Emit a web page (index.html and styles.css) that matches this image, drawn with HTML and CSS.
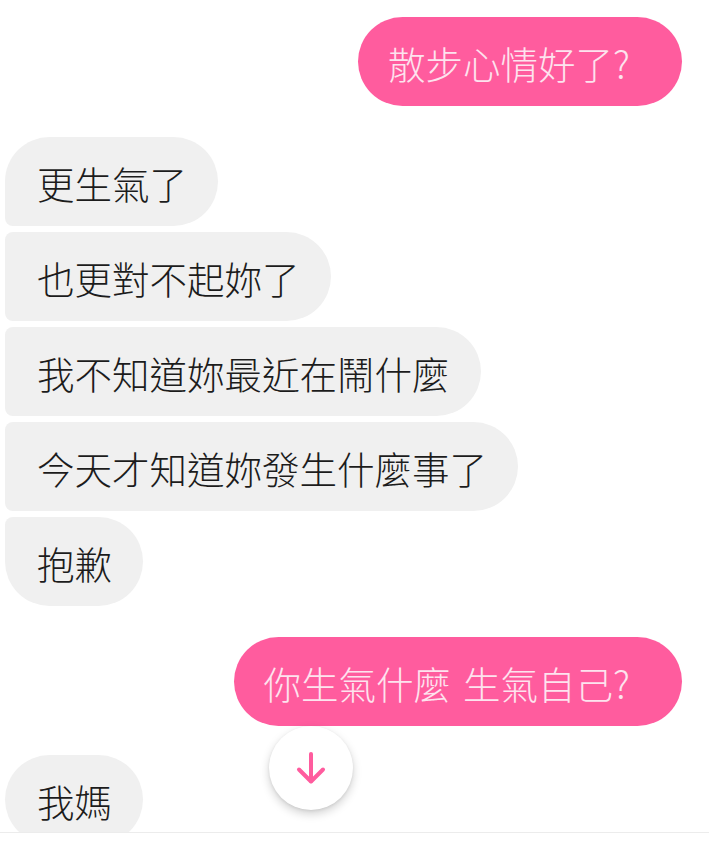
FILE: index.html
```html
<!DOCTYPE html>
<html lang="zh-Hant">
<head>
  <meta charset="UTF-8">
  <meta name="viewport" content="width=device-width, initial-scale=1.0">
  <title>聊天</title>
  <link rel="stylesheet" href="styles.css">
</head>
<body>
  <div class="chat">
    <div class="thread">
      <div class="row row-out">
        <div class="bubble bubble-out">散步心情好了?</div>
      </div>

      <div class="group group-in">
        <div class="bubble bubble-in first">更生氣了</div>
        <div class="bubble bubble-in middle">也更對不起妳了</div>
        <div class="bubble bubble-in middle">我不知道妳最近在鬧什麼</div>
        <div class="bubble bubble-in middle">今天才知道妳發生什麼事了</div>
        <div class="bubble bubble-in last">抱歉</div>
      </div>

      <div class="row row-out">
        <div class="bubble bubble-out">你生氣什麼<span class="gap"></span>生氣自己?</div>
      </div>

      <div class="group group-in">
        <div class="bubble bubble-in first">我媽</div>
      </div>
    </div>

    <button class="scroll-down" aria-label="捲動到最新訊息">
      <svg width="34" height="34" viewBox="0 0 34 34" fill="none" stroke="currentColor" stroke-width="4" stroke-linecap="round" stroke-linejoin="round">
        <path d="M17 3v27"></path>
        <path d="M5 18.5 17 30.5l12-12"></path>
      </svg>
    </button>
  </div>
  <div class="composer"></div>
</body>
</html>
```

FILE: styles.css
```css
:root {
  --pink: #ff5c9e;
  --pink-text: #fde3ee;
  --gray-bubble: #f0f0f0;
  --ink: #1c1c1c;
}

* {
  margin: 0;
  padding: 0;
  box-sizing: border-box;
}

body {
  font-family: "Noto Sans CJK TC", "Noto Sans", sans-serif;
  font-weight: 300;
  background-color: white;
  color: var(--ink);
  width: 709px;
  height: 852px;
  overflow: hidden;
}

.chat {
  position: relative;
  height: 833px;
  overflow: hidden;
  border-bottom: 1px solid #ececec;
}

.thread {
  display: flex;
  flex-direction: column;
  padding: 17px 27px 0 5px;
}

.row-out {
  display: flex;
  justify-content: flex-end;
}

.row-out + .group-in {
  margin-top: 31px;
}

.group-in + .row-out {
  margin-top: 31px;
}

.row-out + .group-in:last-child {
  margin-top: 29px;
}

.group-in {
  display: flex;
  flex-direction: column;
  align-items: flex-start;
  gap: 6px;
}

.bubble {
  height: 89px;
  display: flex;
  align-items: center;
  padding: 3px 31px 0 32px;
  font-size: 37.5px;
  line-height: 1;
  white-space: nowrap;
  border-radius: 45px;
}

.bubble-out {
  background-color: var(--pink);
  color: var(--pink-text);
  padding: 2px 52px 0 30px;
}

.gap {
  display: inline-block;
  width: 12px;
}

.bubble-in {
  background-color: var(--gray-bubble);
}

.bubble-in.first {
  border-bottom-left-radius: 8px;
}

.bubble-in.middle {
  border-top-left-radius: 8px;
  border-bottom-left-radius: 8px;
}

.bubble-in.last {
  border-top-left-radius: 8px;
}

.group-in:last-child .bubble-in.first {
  border-bottom-left-radius: 45px;
}

.scroll-down {
  position: absolute;
  left: 269px;
  top: 726px;
  width: 84px;
  height: 84px;
  border-radius: 50%;
  border: none;
  background-color: white;
  color: var(--pink);
  display: flex;
  align-items: center;
  justify-content: center;
  box-shadow: 0 4px 10px rgba(0, 0, 0, 0.18), 0 1px 3px rgba(0, 0, 0, 0.08);
  cursor: pointer;
}

.composer {
  height: 19px;
  background-color: white;
}
```
